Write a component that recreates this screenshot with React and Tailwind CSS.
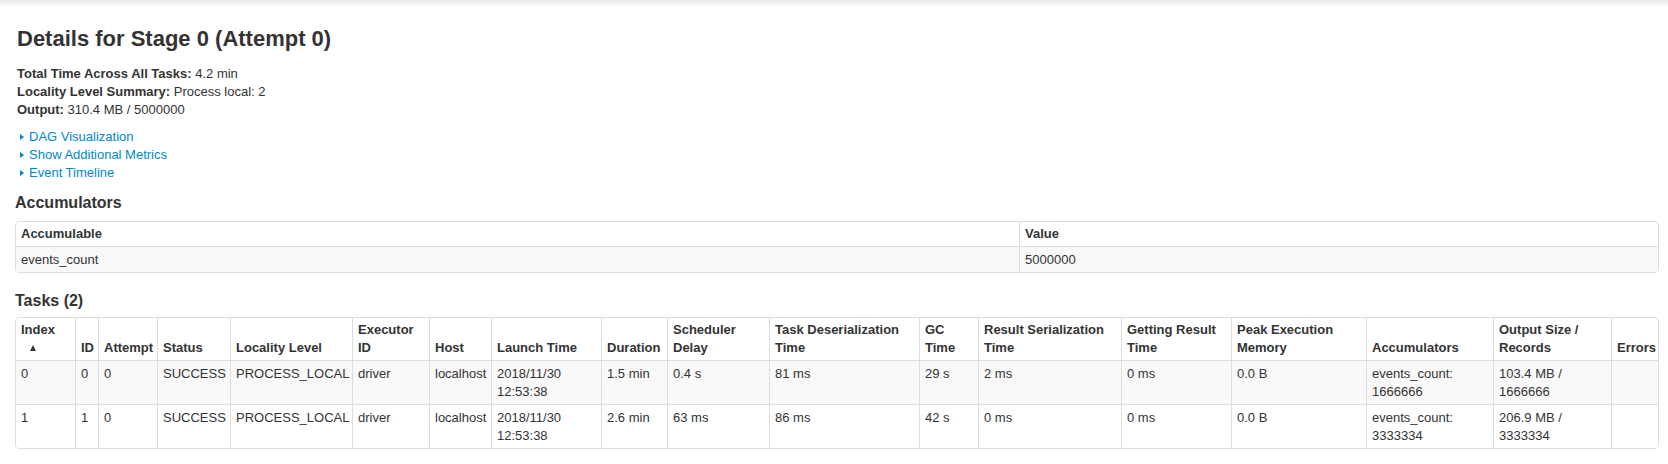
const taskCols = [
  { label: "Index", sort: true, w: "w-[59px]" },
  { label: "ID", w: "w-[23px]" },
  { label: "Attempt", w: "w-[59px]" },
  { label: "Status", w: "w-[73px]" },
  { label: "Locality Level", w: "w-[122px]" },
  { label: "Executor ID", w: "w-[77px]" },
  { label: "Host", w: "w-[62px]" },
  { label: "Launch Time", w: "w-[110px]" },
  { label: "Duration", w: "w-[66px]" },
  { label: "Scheduler Delay", w: "w-[102px]" },
  { label: "Task Deserialization Time", w: "w-[150px]" },
  { label: "GC Time", w: "w-[59px]" },
  { label: "Result Serialization Time", w: "w-[143px]" },
  { label: "Getting Result Time", w: "w-[110px]" },
  { label: "Peak Execution Memory", w: "w-[135px]" },
  { label: "Accumulators", w: "w-[127px]" },
  { label: "Output Size / Records", w: "w-[118px]" },
  { label: "Errors", w: "" },
];

const tasks = [
  ["0", "0", "0", "SUCCESS", "PROCESS_LOCAL", "driver", "localhost", "2018/11/30 12:53:38", "1.5 min", "0.4 s", "81 ms", "29 s", "2 ms", "0 ms", "0.0 B", "events_count: 1666666", "103.4 MB / 1666666", ""],
  ["1", "1", "0", "SUCCESS", "PROCESS_LOCAL", "driver", "localhost", "2018/11/30 12:53:38", "2.6 min", "63 ms", "86 ms", "42 s", "0 ms", "0 ms", "0.0 B", "events_count: 3333334", "206.9 MB / 3333334", ""],
];

// bootstrap-ish condensed cells
const thCls = (i) =>
  i === 0
    ? "px-[5px] pt-[3px] pb-[3px] text-left align-bottom font-bold"
    : "px-[5px] pt-[3px] pb-[3px] text-left align-bottom font-bold border-l border-[#ddd]";
const tdCls = (i) =>
  i === 0
    ? "px-[5px] pt-[4px] pb-[3px] align-top border-t border-[#ddd]"
    : "px-[5px] pt-[4px] pb-[3px] align-top border-t border-l border-[#ddd]";

const Arrow = () => (
  <span className="inline-block w-0 h-0 border-y-[3.5px] border-y-transparent border-l-[4px] border-l-[#0088cc] mr-[5px] align-[1px]" />
);

const App = () => {
  return (
    <div className="min-h-screen bg-white text-[#333] font-['Liberation_Sans',Arial,sans-serif]">
      <div className="h-[8px] bg-linear-to-b from-[#e9e9e9] to-white" />
      <div className="pl-[15px] pr-[9px] pt-[19px]">
        <h3 className="pl-[2px] text-[22px] leading-[24px] font-bold">Details for Stage 0 (Attempt 0)</h3>

        <div className="pl-[2px] mt-[14px] text-[13px] leading-[18px]">
          <div><strong>Total Time Across All Tasks:</strong> 4.2 min</div>
          <div><strong>Locality Level Summary:</strong> Process local: 2</div>
          <div><strong>Output:</strong> 310.4 MB / 5000000</div>
        </div>

        {/* collapsible sections */}
        <div className="pl-[5px] mt-[9px] text-[13px] leading-[18px] text-[#0088cc]">
          <div><Arrow /><a href="#">DAG Visualization</a></div>
          <div><Arrow /><a href="#">Show Additional Metrics</a></div>
          <div><Arrow /><a href="#">Event Timeline</a></div>
        </div>

        <h4 className="mt-[11px] text-[16px] leading-[20px] font-bold">Accumulators</h4>
        <div className="mt-[8px] border border-[#ddd] rounded-[4px] overflow-hidden">
          <table className="w-full table-fixed border-separate border-spacing-0 text-[13px] leading-[18px]">
            <colgroup>
              <col className="w-[1003px]" />
              <col />
            </colgroup>
            <thead>
              <tr>
                <th className={thCls(0)}>Accumulable</th>
                <th className={thCls(1)}>Value</th>
              </tr>
            </thead>
            <tbody>
              <tr className="bg-[#f9f9f9]">
                <td className={tdCls(0)}>events_count</td>
                <td className={tdCls(1)}>5000000</td>
              </tr>
            </tbody>
          </table>
        </div>

        <h4 className="mt-[18px] text-[16px] leading-[20px] font-bold">Tasks (2)</h4>
        <div className="mt-[6px] border border-[#ddd] rounded-[4px] overflow-hidden">
          <table className="w-full table-fixed border-separate border-spacing-0 text-[13px] leading-[18px]">
            <colgroup>
              {taskCols.map((c, i) => (
                <col key={i} className={c.w} />
              ))}
            </colgroup>
            <thead>
              <tr>
                {taskCols.map((c, i) => (
                  <th key={i} className={thCls(i)}>
                    {c.label}
                    {c.sort && (
                      <span className="flex items-center h-[18px] pl-[9px]">
                        <span className="w-0 h-0 border-x-[3.5px] border-x-transparent border-b-[6px] border-b-[#333]" />
                      </span>
                    )}
                  </th>
                ))}
              </tr>
            </thead>
            <tbody>
              {tasks.map((row, r) => (
                <tr key={r} className={r === 0 ? "bg-[#f9f9f9]" : "bg-white"}>
                  {row.map((v, i) => (
                    <td key={i} className={tdCls(i)}>{v}</td>
                  ))}
                </tr>
              ))}
            </tbody>
          </table>
        </div>
      </div>
    </div>
  );
};

export default App;
